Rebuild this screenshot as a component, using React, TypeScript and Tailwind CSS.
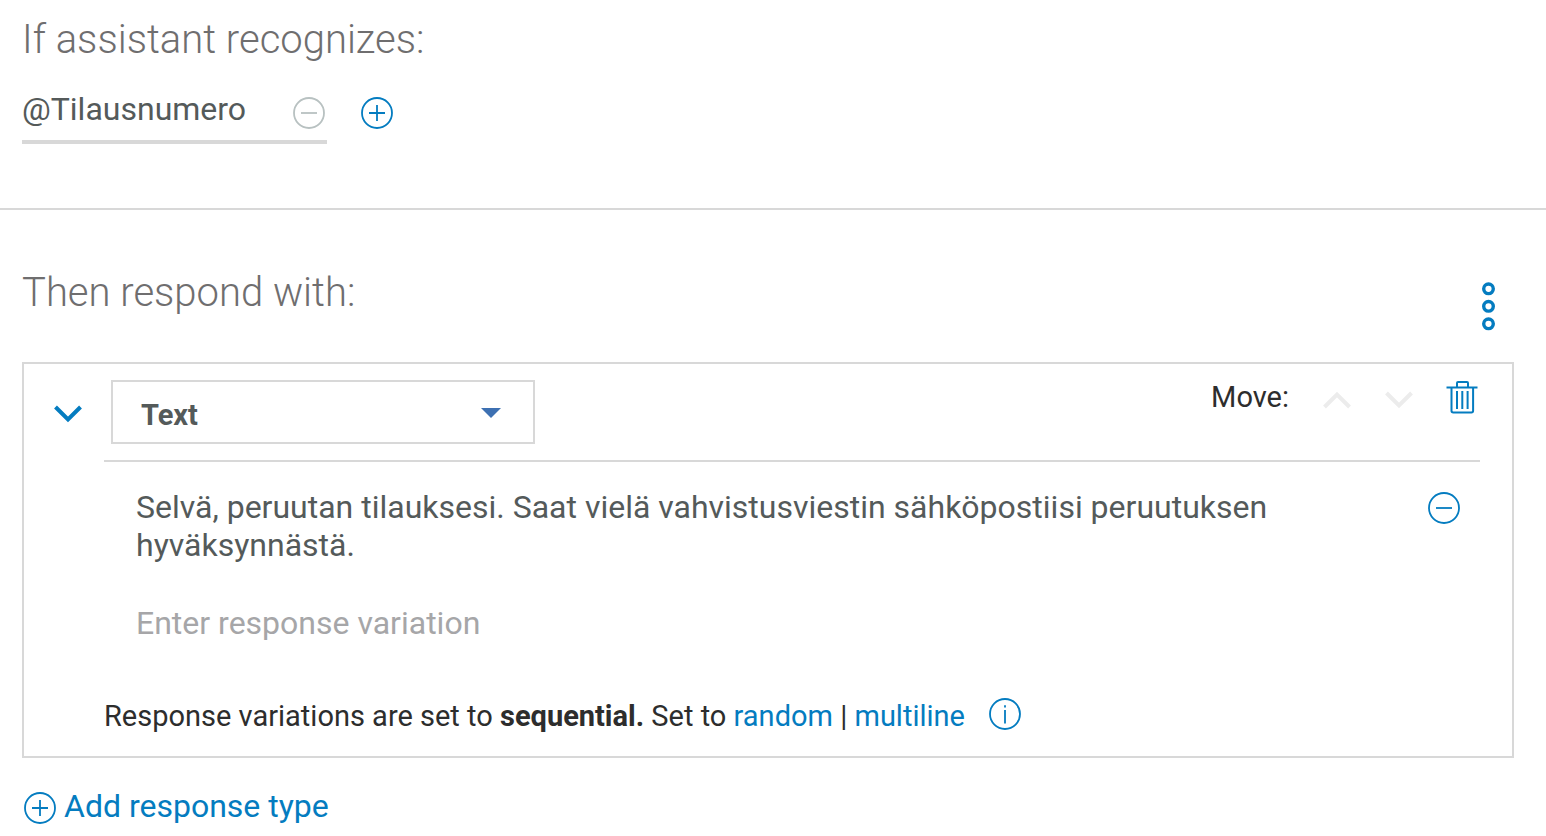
import type { ReactNode } from 'react';

function CircleIcon({ children }: { children: ReactNode }) {
  return (
    <svg viewBox="0 0 32 32" className="size-8" fill="none" stroke="currentColor" strokeWidth="1.8" aria-hidden="true">
      <circle cx="16" cy="16" r="15" />
      {children}
    </svg>
  );
}

const MinusCircle = () => (
  <CircleIcon>
    <path d="M8 16h16" />
  </CircleIcon>
);

const PlusCircle = () => (
  <CircleIcon>
    <path d="M8 16h16M16 8v16" />
  </CircleIcon>
);

const InfoCircle = () => (
  <CircleIcon>
    <path d="M16 12v13.500M16 7.200v2.200" />
  </CircleIcon>
);

function Chevron({ up = false }: { up?: boolean }) {
  return (
    <svg viewBox="0 0 28 18" className="h-[18px] w-7" fill="none" stroke="currentColor" strokeWidth="4" aria-hidden="true">
      <path d={up ? 'M1.500 16L14 3.500L26.500 16' : 'M1.500 2L14 14.500L26.500 2'} />
    </svg>
  );
}

function Trash() {
  return (
    <svg viewBox="0 0 32 34" className="h-[34px] w-8" fill="none" stroke="currentColor" strokeWidth="2" aria-hidden="true">
      <path d="M0.500 7.500h31M11 7.500V3q0-1 1-1h9q1 0 1 1v4.500" />
      <path d="M5.500 7.500v23.300q0 1.700 1.700 1.700h18.200q1.700 0 1.700-1.700V7.500" />
      <path d="M11 11v18M16.300 11v18M21.600 11v18" />
    </svg>
  );
}

function Kebab() {
  return (
    <svg viewBox="0 0 14 50" className="h-[50px] w-3.5" fill="none" stroke="currentColor" strokeWidth="3.400" aria-hidden="true">
      <circle cx="6.500" cy="7.800" r="4.800" />
      <circle cx="6.500" cy="25.300" r="4.800" />
      <circle cx="6.500" cy="42.800" r="4.800" />
    </svg>
  );
}

export default function App() {
  return (
    <main className="bg-white font-['Roboto','Liberation_Sans',sans-serif] text-[#2d2d2d]">
      <section className="border-b-2 border-[#d8d8d8] px-[22px] pt-4 pb-16">
        <h2 className="text-[40px] leading-[48px] font-light text-[#6f6e6f]">If assistant recognizes:</h2>
        <div className="mt-4 flex items-center gap-[34px]">
          <div className="flex h-16 w-[305px] items-center border-b-4 border-[#d8d8d8]">
            <input
              aria-label="Condition"
              defaultValue="@Tilausnumero"
              className="h-[60px] min-w-0 flex-1 pb-0.5 text-[32px] text-[#545a5a] outline-none"
            />
            <button type="button" aria-label="Remove condition" className="mt-1.5 mr-0.5 text-[#b8c1c1]">
              <MinusCircle />
            </button>
          </div>
          <button type="button" aria-label="Add condition" className="mt-0.5 text-[#047cc0]">
            <PlusCircle />
          </button>
        </div>
      </section>

      <section className="pt-14 pr-8 pl-[22px]">
        <header className="flex items-start justify-between pr-[18px]">
          <h2 className="pt-[3px] text-[40px] leading-[48px] font-light text-[#6f6e6f]">Then respond with:</h2>
          <button type="button" aria-label="Response options" className="mt-[15px] text-[#047cc0]">
            <Kebab />
          </button>
        </header>

        <div className="mt-[31px] border-2 border-[#d8d8d8] pt-4 pr-8 pb-5 pl-20">
          <div className="flex items-start border-b-2 border-[#d8d8d8] pb-4">
            <button type="button" aria-label="Collapse response" className="mt-[25px] mr-[29px] -ml-[50px] text-[#047cc0]">
              <Chevron />
            </button>
            <div className="relative w-[424px]">
              <select
                aria-label="Response type"
                className="h-16 w-full appearance-none border-2 border-[#d8d8d8] bg-white pt-2 pl-7 text-[29px] font-bold text-[#545a5a]"
              >
                <option>Text</option>
              </select>
              <svg viewBox="0 0 20 10" className="pointer-events-none absolute top-7 right-[34px] h-2.5 w-5" aria-hidden="true">
                <path d="M0 0h20L10 10z" fill="#3d70b2" />
              </svg>
            </div>
            <div className="ml-auto flex items-center pr-0.5">
              <span className="mr-[34px] text-[29px] leading-[34px]">Move:</span>
              <button type="button" disabled aria-label="Move up" className="mt-1.5 mr-[34px] text-[#ececec]">
                <Chevron up />
              </button>
              <button type="button" disabled aria-label="Move down" className="mt-1.5 mr-[33px] text-[#ececec]">
                <Chevron />
              </button>
              <button type="button" aria-label="Delete response" className="text-[#047cc0]">
                <Trash />
              </button>
            </div>
          </div>

          <div className="flex items-start justify-between pt-[26px] pr-5 pl-8">
            <textarea
              aria-label="Response text"
              rows={2}
              defaultValue="Selvä, peruutan tilauksesi. Saat vielä vahvistusviestin sähköpostiisi peruutuksen hyväksynnästä."
              className="block w-11/12 resize-none overflow-hidden text-[32px] leading-[38px] text-[#545a5a] outline-none"
            />
            <button type="button" aria-label="Remove response" className="mt-1 text-[#047cc0]">
              <MinusCircle />
            </button>
          </div>
          <div className="mt-10 pl-8">
            <input
              aria-label="Response variation"
              placeholder="Enter response variation"
              className="block h-[38px] w-11/12 text-[32px] outline-none placeholder:text-[#a6a6a8]"
            />
          </div>
          <div className="mt-[54px] flex items-center gap-6">
            <p className="text-[29px] leading-10">
              Response variations are set to <strong>sequential.</strong> Set to{' '}
              <a href="#random" className="text-[#047cc0]">random</a> |{' '}
              <a href="#multiline" className="text-[#047cc0]">multiline</a>
            </p>
            <button type="button" aria-label="About response variations" className="-mt-1 text-[#047cc0]">
              <InfoCircle />
            </button>
          </div>
        </div>

        <button type="button" className="mt-7 flex items-center gap-2 pl-0.5 text-[32px] leading-10 text-[#047cc0]">
          <span className="pt-1">
            <PlusCircle />
          </span>
          Add response type
        </button>
      </section>
    </main>
  );
}
